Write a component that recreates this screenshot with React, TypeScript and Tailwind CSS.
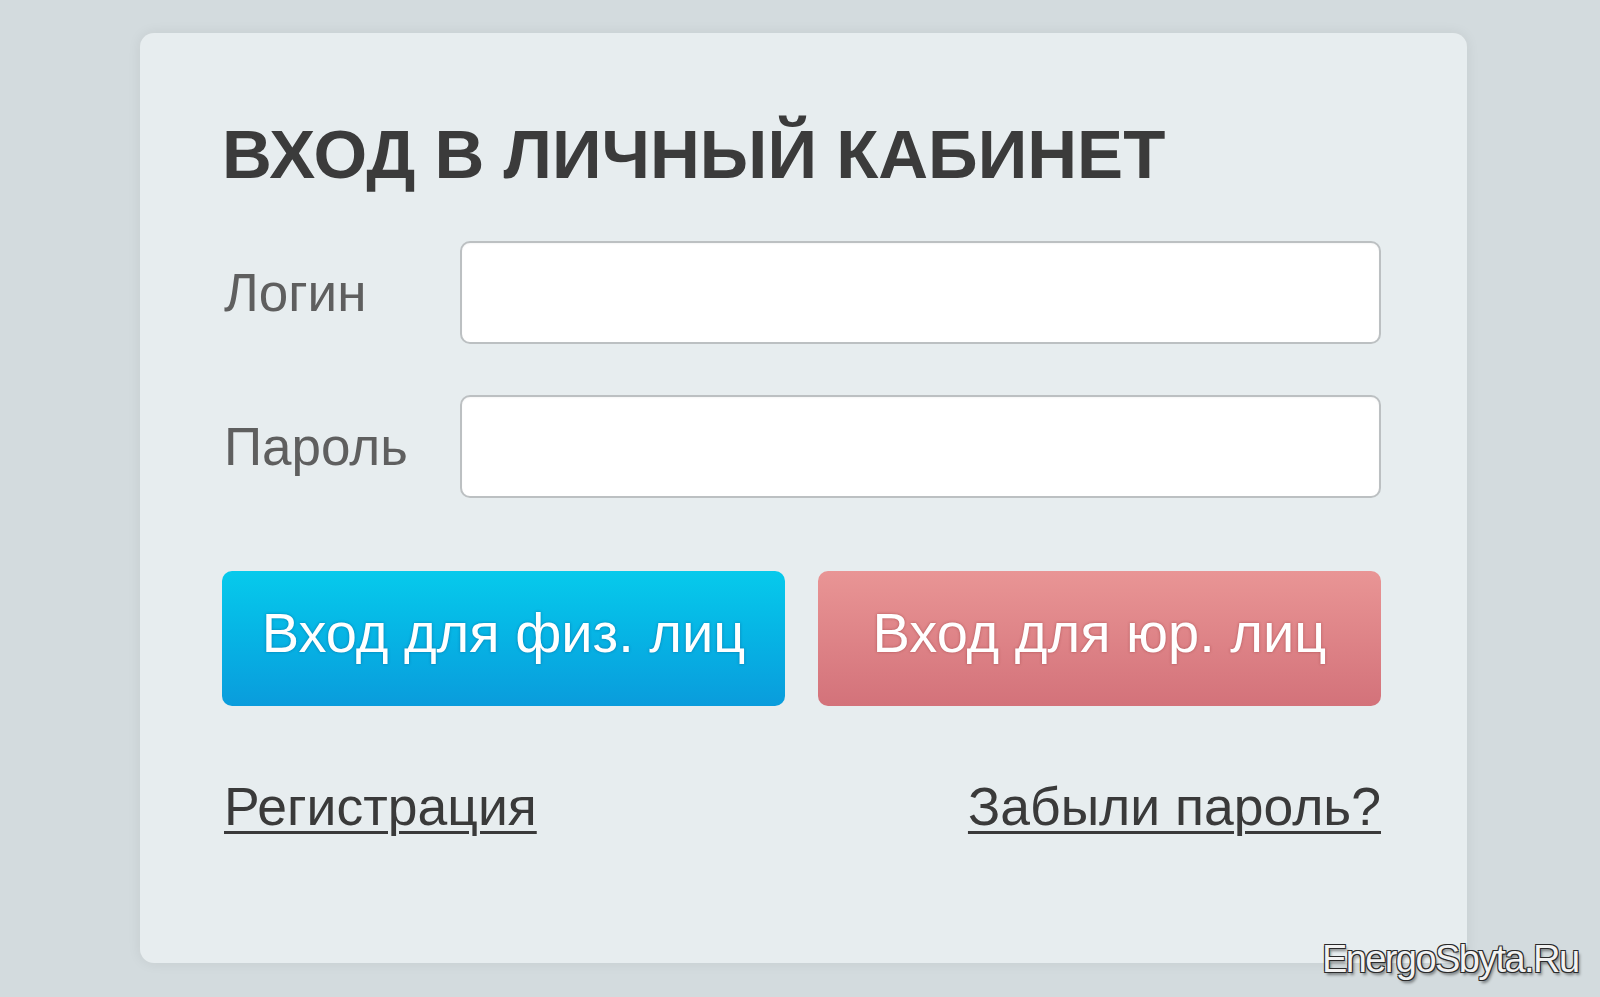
import React from "react"

const font = "font-['Liberation_Sans',Arial,sans-serif]"

function Field({ label, type }: { label: string; type: string }) {
  return (
    <div className="grid grid-cols-[238px_1fr] items-center">
      <label className="pl-[2px] text-[53px] leading-none text-[#5f5f5f]">{label}</label>
      <input
        type={type}
        className="h-[103px] w-full rounded-[10px] border-2 border-[#bcc0c2] bg-white shadow-[inset_0_1px_2px_rgba(0,0,0,0.04)] outline-none"
      />
    </div>
  )
}

export default function App() {
  return (
    <div className={`relative min-h-[997px] w-[1600px] overflow-hidden bg-[#d3dbde] ${font}`}>
      <div className="ml-[140px] mt-[33px] flex h-[930px] w-[1327px] flex-col rounded-[14px] bg-[#e7edef] pl-[82px] pr-[86px] pt-[87px] shadow-[0_0_14px_rgba(0,0,0,0.07)]">
        <h1 className="text-[69px] font-bold leading-none text-[#3b3b3b]">
          ВХОД В ЛИЧНЫЙ КАБИНЕТ
        </h1>

        <div className="mt-[52px] flex flex-col gap-[51px]">
          <Field label="Логин" type="text" />
          <Field label="Пароль" type="password" />
        </div>

        <div className="mt-[73px] grid grid-cols-2 gap-[33px]">
          <button className="flex h-[135px] items-center justify-center rounded-[10px] bg-gradient-to-b from-[#07caec] to-[#0a9cdc] pb-[12px] text-[56px] leading-none text-white [text-shadow:0_0_3px_rgba(0,60,110,0.45)]">
            Вход для физ. лиц
          </button>
          <button className="flex h-[135px] items-center justify-center rounded-[10px] bg-gradient-to-b from-[#e99595] to-[#d3727a] pb-[12px] text-[56px] leading-none text-white [text-shadow:0_0_3px_rgba(120,30,30,0.45)]">
            Вход для юр. лиц
          </button>
        </div>

        <div className="mt-[74px] flex items-start justify-between pl-[2px] text-[53.5px] leading-none text-[#3a3a3a]">
          <a href="#" className="underline decoration-[3px] underline-offset-[6px]">
            Регистрация
          </a>
          <a href="#" className="underline decoration-[3px] underline-offset-[6px]">
            Забыли пароль?
          </a>
        </div>
      </div>

      <div className="absolute left-[1322px] top-[940px] text-[38px] leading-none tracking-[-1.6px] text-[#f2f2f2] [text-shadow:1px_1px_0_#2a2a2a,-1px_-1px_0_#2a2a2a,1px_-1px_0_#2a2a2a,-1px_1px_0_#2a2a2a,2px_3px_3px_rgba(0,0,0,0.45)]">
        EnergoSbyta.Ru
      </div>
    </div>
  )
}
